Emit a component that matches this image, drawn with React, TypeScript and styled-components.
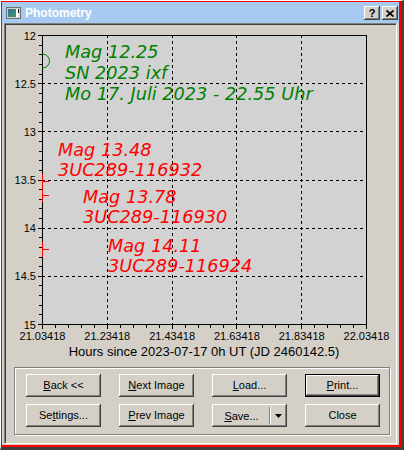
import styled, { createGlobalStyle, css } from 'styled-components';

const GlobalStyle = createGlobalStyle`
  html, body { margin: 0; padding: 0; background: #ffffff; }
  * { box-sizing: border-box; }
`;

const PLOT = { left: 42, right: 366, top: 35, bottom: 324 };
const Y_MIN = 12;
const Y_MAX = 15;
const X_LABELS = ['21.03418', '21.23418', '21.43418', '21.63418', '21.83418', '22.03418'];

const yPos = (mag: number) =>
  PLOT.top + ((mag - Y_MIN) / (Y_MAX - Y_MIN)) * (PLOT.bottom - PLOT.top);
const xPos = (i: number) => PLOT.left + (i / 5) * (PLOT.right - PLOT.left);

type Note = { x: number; y: number; color: string; lines: string[] };

const notes: Note[] = [
  { x: 65, y: 58, color: '#008000', lines: ['Mag 12.25', 'SN 2023 ixf', 'Mo 17. Juli 2023 - 22.55 Uhr'] },
  { x: 58, y: 156, color: '#ff0000', lines: ['Mag 13.48', '3UC289-116932'] },
  { x: 83, y: 203, color: '#ff0000', lines: ['Mag 13.78', '3UC289-116930'] },
  { x: 108, y: 252, color: '#ff0000', lines: ['Mag 14.11', '3UC289-116924'] },
];

function Chart() {
  const yTicks = Array.from({ length: 31 }, (_, k) => k);
  const xTicks = Array.from({ length: 26 }, (_, k) => k);
  const majorY = [12, 12.5, 13, 13.5, 14, 14.5, 15];

  return (
    <ChartSvg width={389} height={337} viewBox="6 25 389 337">
      <defs>
        <clipPath id="plotClip">
          <rect x={PLOT.left} y={PLOT.top} width={PLOT.right - PLOT.left} height={PLOT.bottom - PLOT.top} />
        </clipPath>
      </defs>
      <rect
        x={PLOT.left}
        y={PLOT.top}
        width={PLOT.right - PLOT.left}
        height={PLOT.bottom - PLOT.top}
        fill="#d2d2d2"
      />
      <g stroke="#000" strokeWidth={1} strokeDasharray="3 3" shapeRendering="crispEdges">
        {majorY.slice(1, -1).map((m) => (
          <line key={m} x1={PLOT.left} x2={PLOT.right} y1={Math.round(yPos(m)) + 0.5} y2={Math.round(yPos(m)) + 0.5} />
        ))}
        {[1, 2, 3, 4].map((i) => (
          <line key={i} x1={Math.round(xPos(i)) + 0.5} x2={Math.round(xPos(i)) + 0.5} y1={PLOT.top} y2={PLOT.bottom} />
        ))}
      </g>
      <rect
        x={PLOT.left + 0.5}
        y={PLOT.top + 0.5}
        width={PLOT.right - PLOT.left}
        height={PLOT.bottom - PLOT.top}
        fill="none"
        stroke="#000"
        shapeRendering="crispEdges"
      />
      <g stroke="#000" shapeRendering="crispEdges">
        {yTicks.map((k) => {
          const y = Math.round(PLOT.top + (k * (PLOT.bottom - PLOT.top)) / 30) + 0.5;
          return <line key={k} x1={k % 5 === 0 ? 38 : 39} x2={PLOT.left} y1={y} y2={y} />;
        })}
        {xTicks.map((k) => {
          const x = Math.round(PLOT.left + (k * (PLOT.right - PLOT.left)) / 25) + 0.5;
          return <line key={k} x1={x} x2={x} y1={PLOT.bottom + 1} y2={k % 5 === 0 ? PLOT.bottom + 5 : PLOT.bottom + 4} />;
        })}
      </g>
      <g fontFamily='"Liberation Sans", Arial, sans-serif' fontSize={11} fill="#000">
        {majorY.map((m) => (
          <text key={m} x={36} y={yPos(m) + 0.5} textAnchor="end" dominantBaseline="central">
            {m}
          </text>
        ))}
        {X_LABELS.map((l, i) => (
          <text key={l} x={xPos(i) + 0.5} y={336} textAnchor="middle" dominantBaseline="central">
            {l}
          </text>
        ))}
        <text x={204} y={351} fontSize={13} textAnchor="middle" dominantBaseline="central">
          Hours since 2023-07-17 0h UT (JD 2460142.5)
        </text>
      </g>

      {/* markers */}
      <circle cx={42.5} cy={61} r={7} fill="none" stroke="#008000" clipPath="url(#plotClip)" />
      <g stroke="#ff0000" shapeRendering="crispEdges">
        <line x1={42.5} x2={42.5} y1={174} y2={202} />
        <line x1={42} x2={49} y1={181.5} y2={181.5} />
        <line x1={42} x2={49} y1={195.5} y2={195.5} />
        <line x1={42.5} x2={42.5} y1={242} y2={257} />
        <line x1={42} x2={49} y1={249.5} y2={249.5} />
      </g>

      <g fontFamily='"DejaVu Sans", Verdana, sans-serif' fontStyle="italic" fontSize={17.7}>
        {notes.map((n) => (
          <text key={n.lines[0]} fill={n.color}>
            {n.lines.map((line, i) => (
              <tspan key={line} x={n.x} y={n.y + i * (n.lines.length === 3 ? 21 : 19.5)}>
                {line}
              </tspan>
            ))}
          </text>
        ))}
      </g>
    </ChartSvg>
  );
}

function AppIcon() {
  return (
    <svg width={15} height={12} viewBox="0 0 15 12">
      <defs>
        <linearGradient id="iconFill" x1="0" y1="0" x2="1" y2="1">
          <stop offset="0" stopColor="#2a6f9a" />
          <stop offset="1" stopColor="#3f9a6c" />
        </linearGradient>
      </defs>
      <rect x={0.5} y={0.5} width={14} height={11} fill="#d4d0c8" stroke="#707070" />
      <rect x={2} y={2} width={8} height={8} fill="url(#iconFill)" />
      <rect x={10} y={2} width={3} height={8} fill="#ffffff" />
      <rect x={12} y={2} width={1} height={4} fill="#000" />
    </svg>
  );
}

export default function App() {
  return (
    <>
      <GlobalStyle />
      <Window>
        <Frame>
          <TitleBar>
            <AppIcon />
            <Title>Photometry</Title>
            <CaptionButtons>
              <CaptionButton>?</CaptionButton>
              <CaptionButton>
                <svg width={8} height={7} viewBox="0 0 8 7">
                  <path d="M0.5 0.5 L7.5 6.5 M7.5 0.5 L0.5 6.5" stroke="#000" strokeWidth={1.7} />
                </svg>
              </CaptionButton>
            </CaptionButtons>
          </TitleBar>
          <Body>
            <Client>
              <Chart />
              <GroupBox>
                <Button>
                  <Key>B</Key>ack &lt;&lt;
                </Button>
                <Button>
                  <Key>N</Key>ext Image
                </Button>
                <Button>
                  <Key>L</Key>oad...
                </Button>
                <Button $default>
                  <Key>P</Key>rint...
                </Button>
                <Button>
                  Se<Key>t</Key>tings...
                </Button>
                <Button>
                  <Key>P</Key>rev Image
                </Button>
                <SplitButton>
                  <SplitMain>
                    <Key>S</Key>ave...
                  </SplitMain>
                  <SplitDivider />
                  <SplitArrow>
                    <svg width={7} height={4} viewBox="0 0 7 4">
                      <path d="M0 0 H7 L3.5 4 Z" fill="#000" />
                    </svg>
                  </SplitArrow>
                </SplitButton>
                <Button>Close</Button>
              </GroupBox>
            </Client>
          </Body>
        </Frame>
      </Window>
    </>
  );
}

const Window = styled.div`
  width: 404px;
  height: 450px;
  display: flex;
  flex-direction: column;
  background: #d4d0c8;
  border-style: solid;
  border-color: #ffffff #404040 #404040 #ffffff;
  border-width: 1px 3px 3px 1px;
  font-family: "Liberation Sans", Arial, sans-serif;
`;

const Frame = styled.div`
  flex: 1;
  min-height: 0;
  display: flex;
  flex-direction: column;
  border-style: solid;
  border-color: #ff0000;
  border-width: 1px 2px 2px 1px;
`;

const TitleBar = styled.div`
  flex: none;
  height: 21px;
  display: flex;
  align-items: center;
  padding: 1px 1px 0 4px;
  background: #a6caf0;
`;

const Title = styled.span`
  margin-left: 4px;
  color: #ffffff;
  font-size: 12px;
  font-weight: bold;
`;

const CaptionButtons = styled.div`
  margin-left: auto;
  display: flex;
  gap: 2px;
`;

const CaptionButton = styled.div`
  width: 16px;
  height: 14px;
  display: flex;
  align-items: center;
  justify-content: center;
  background: #d4d0c8;
  color: #000;
  font-size: 11px;
  font-weight: bold;
  box-shadow: inset -1px -1px #404040, inset 1px 1px #ffffff, inset -2px -2px #808080;
`;

const Body = styled.div`
  flex: 1;
  min-height: 0;
  display: flex;
  padding: 0 2px 1px 2px;
`;

const Client = styled.div`
  flex: 1;
  display: flex;
  flex-direction: column;
  padding: 1px;
  border: 1px solid;
  border-color: #808080 #ffffff #ffffff #808080;
  box-shadow: inset 1px 1px #404040;
`;

const ChartSvg = styled.svg`
  display: block;
  flex: none;
`;

const GroupBox = styled.div`
  margin: 5px 0 0 8px;
  width: 376px;
  height: 68px;
  padding: 6px 0 0 11px;
  border: 1px solid #808080;
  box-shadow: inset 1px 1px #ffffff, 1px 1px #ffffff;
  display: grid;
  grid-template-columns: repeat(4, 75px);
  grid-auto-rows: 23px;
  column-gap: 18px;
  row-gap: 7px;
  align-content: start;
`;

const raised = css`
  background: #d4d0c8;
  box-shadow: inset -1px -1px #404040, inset 1px 1px #ffffff, inset -2px -2px #808080;
`;

const Button = styled.button<{ $default?: boolean }>`
  width: 75px;
  height: 23px;
  padding: 0;
  border: none;
  ${raised}
  color: #000;
  font-family: "Liberation Sans", Arial, sans-serif;
  font-size: 11px;
  line-height: 23px;
  text-align: center;
  ${(p) =>
    p.$default &&
    css`
      box-shadow: inset 0 0 0 1px #000000, inset -2px -2px #404040, inset 2px 2px #ffffff,
        inset -3px -3px #808080;
    `}
`;

const Key = styled.span`
  text-decoration: underline;
`;

const SplitButton = styled.div`
  width: 75px;
  height: 23px;
  display: flex;
  align-items: center;
  ${raised}
  color: #000;
  font-size: 11px;
`;

const SplitMain = styled.div`
  width: 57px;
  text-align: center;
  padding-left: 2px;
`;

const SplitDivider = styled.div`
  width: 2px;
  height: 17px;
  border-left: 1px solid #808080;
  border-right: 1px solid #ffffff;
`;

const SplitArrow = styled.div`
  flex: 1;
  display: flex;
  justify-content: center;
  padding-right: 2px;
`;
